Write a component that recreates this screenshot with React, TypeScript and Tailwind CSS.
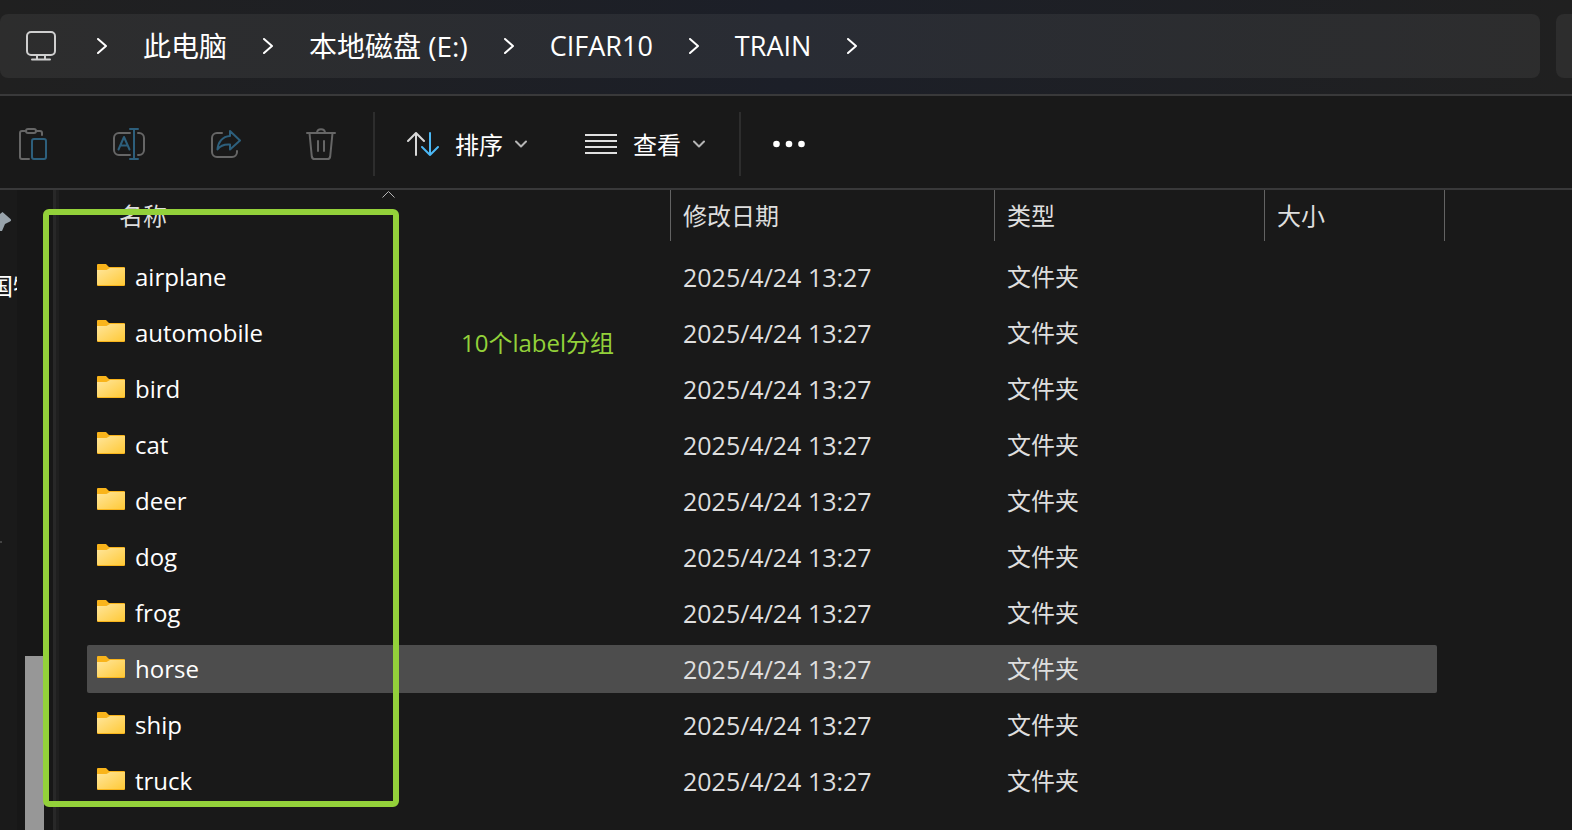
import React from "react";

interface IconProps {
  className?: string;
}

const crumbs = [
  { name: "此电脑", size: "text-[28px]" },
  { name: "本地磁盘 (E:)", size: "text-[28px]" },
  { name: "CIFAR10", size: "text-[27px]" },
  { name: "TRAIN", size: "text-[27px]" },
];

const folders = [
  "airplane",
  "automobile",
  "bird",
  "cat",
  "deer",
  "dog",
  "frog",
  "horse",
  "ship",
  "truck",
];

const selected = "horse";

function MonitorIcon() {
  return (
    <svg width="32" height="32" viewBox="0 0 32 32" fill="none" stroke="#cfcfcf" strokeWidth="2" strokeLinecap="round">
      <rect x="2" y="2" width="28" height="23" rx="4" />
      <path d="M12 25v4M20 25v4M7 29.5h18" />
    </svg>
  );
}

function CrumbArrow() {
  return (
    <svg className="shrink-0" width="10" height="16" viewBox="0 0 10 16" fill="none" stroke="#fff" strokeWidth="2" strokeLinecap="round" strokeLinejoin="round">
      <path d="M1 1l8 7-8 7" />
    </svg>
  );
}

function DownArrow({ className }: IconProps) {
  return (
    <svg className={className} width="12" height="8" viewBox="0 0 12 8" fill="none" stroke="#b5b5b5" strokeWidth="2" strokeLinecap="round" strokeLinejoin="round">
      <path d="M1 1.5l5 5 5-5" />
    </svg>
  );
}

function PasteIcon() {
  return (
    <svg width="32" height="32" viewBox="0 0 32 32" fill="none" stroke="#666" strokeWidth="2" strokeLinecap="round" strokeLinejoin="round">
      <path d="M9 3H5a2 2 0 0 0-2 2v24a2 2 0 0 0 2 2h7M19 3h4a2 2 0 0 1 2 2v2" />
      <rect x="9" y="1" width="10" height="4" rx="2" />
      <rect x="15" y="11" width="14" height="20" rx="2" stroke="#2d5f7c" />
    </svg>
  );
}

function RenameIcon() {
  return (
    <svg width="32" height="32" viewBox="0 0 32 32" fill="none" stroke="#666" strokeWidth="2" strokeLinecap="round" strokeLinejoin="round">
      <path d="M17 5H6a5 5 0 0 0-5 5v12a5 5 0 0 0 5 5h11M25 5h1a5 5 0 0 1 5 5v12a5 5 0 0 1-5 5h-1" />
      <path d="M5.5 21.500l5.500-12.500 5.500 12.500M7.500 17.500h7M21 1v30M17 1h8M17 31h8" stroke="#2d5f7c" />
    </svg>
  );
}

function ShareIcon() {
  return (
    <svg width="32" height="32" viewBox="0 0 32 32" fill="none" stroke="#666" strokeWidth="2" strokeLinecap="round" strokeLinejoin="round">
      <path d="M13 5H8a5 5 0 0 0-5 5v14a5 5 0 0 0 5 5h15a5 5 0 0 0 5-5v-1" />
      <path d="M21 3l10 9.500-10 9v-5c-6-.5-10 1.500-12.500 5C9 14 13.500 8.500 21 8z" stroke="#2d5f7c" />
    </svg>
  );
}

function DeleteIcon() {
  return (
    <svg width="32" height="32" viewBox="0 0 32 32" fill="none" stroke="#666" strokeWidth="2" strokeLinecap="round" strokeLinejoin="round">
      <path d="M2 5h28M12 5c0-5 8-5 8 0M4.500 5l2.300 23.500c.2 1.500 1 2.500 2.700 2.500h13c1.700 0 2.500-1 2.700-2.500L27.500 5M13 13v10M19 13v10" />
    </svg>
  );
}

function SortIcon() {
  return (
    <svg width="32" height="24" viewBox="0 0 32 24" fill="none" stroke="#d8d8d8" strokeWidth="2" strokeLinecap="round" strokeLinejoin="round">
      <path d="M9 23V1M1 9l8-8 8 8" />
      <path d="M23 1v22M15 15l8 8 8-8" stroke="#4cb8f5" />
    </svg>
  );
}

function ViewIcon() {
  return (
    <svg width="32" height="20" viewBox="0 0 32 20" fill="none" stroke="#e0e0e0" strokeWidth="2">
      <path d="M0 1h32M0 7h32M0 13h32M0 19h32" />
    </svg>
  );
}

function FolderIcon() {
  return (
    <svg className="shrink-0" width="28" height="26" viewBox="0 0 28 26">
      <path d="M0 1a1 1 0 0 1 1-1h8l3 3h15a1 1 0 0 1 1 1v17a1 1 0 0 1-1 1H1a1 1 0 0 1-1-1z" fill="#f9b41b" />
      <path d="M0 6h9.500L13 4h15v16a1 1 0 0 1-1 1H1a1 1 0 0 1-1-1z" fill="url(#folder)" />
    </svg>
  );
}

function AddressBar() {
  return (
    <header className="flex gap-4 border-b-2 border-[#39393a] bg-linear-to-r from-[#202020] via-[#1c1f28] to-[#202020] py-[14px] pb-4">
      <nav className="flex h-16 flex-1 items-center gap-9 rounded-lg bg-white/6 pl-[25px]">
        <button aria-label="位置" className="mr-1">
          <MonitorIcon />
        </button>
        <CrumbArrow />
        {crumbs.map((crumb) => (
          <React.Fragment key={crumb.name}>
            <a href="#" className={`whitespace-nowrap leading-8 ${crumb.size}`}>
              {crumb.name}
            </a>
            <CrumbArrow />
          </React.Fragment>
        ))}
      </nav>
      <div className="h-16 w-4 rounded-l-lg bg-white/6" />
    </header>
  );
}

function Toolbar() {
  return (
    <div className="flex h-[94px] items-center border-b-2 border-[#39393a] pt-1">
      <div className="flex gap-16 pl-[17px]">
        <button aria-label="粘贴">
          <PasteIcon />
        </button>
        <button aria-label="重命名">
          <RenameIcon />
        </button>
        <button aria-label="共享">
          <ShareIcon />
        </button>
        <button aria-label="删除">
          <DeleteIcon />
        </button>
      </div>
      <div className="ml-9 h-16 w-[2px] bg-[#2d2d2d]" />
      <button className="ml-8 flex items-center">
        <SortIcon />
        <span className="ml-4 pt-[2px]">排序</span>
        <DownArrow className="ml-3" />
      </button>
      <button className="ml-[58px] flex items-center">
        <ViewIcon />
        <span className="ml-4 pt-[2px]">查看</span>
        <DownArrow className="ml-3" />
      </button>
      <div className="ml-[34px] h-16 w-[2px] bg-[#2d2d2d]" />
      <button aria-label="更多" className="ml-8">
        <svg width="32" height="8" viewBox="0 0 32 8" fill="#fff">
          <circle cx="3.500" cy="4" r="3.300" />
          <circle cx="16" cy="4" r="3.300" />
          <circle cx="28.500" cy="4" r="3.300" />
        </svg>
      </button>
    </div>
  );
}

function Sidebar() {
  return (
    <aside className="flex w-[59px] shrink-0 bg-[#171717]">
      <div className="w-[17px] overflow-hidden bg-[#1a1a1a] pt-[22px]">
        <svg width="12" height="20" viewBox="0 0 12 20" fill="#98a3ab">
          <path d="M0 2l2.500-2 8 7c1 1 .7 2-.5 2.500L5 12l-3 7H0z" />
        </svg>
        <p className="-ml-[11px] mt-[38px] whitespace-nowrap leading-8">国特</p>
        <div className="mt-[239px] h-[2px] w-[2px] bg-[#444]" />
      </div>
      <div className="ml-2 flex w-[19px] flex-col pt-[466px]">
        <div className="flex-1 bg-[#979797]" />
      </div>
      <div className="ml-[9px] w-[3px] bg-[#282828]" />
      <div className="w-[3px] bg-[#1f1f1f]" />
    </aside>
  );
}

function HeaderCell({ title, sorted }: { title: string; sorted?: boolean }) {
  return (
    <th className="relative h-[55px] p-0 text-left align-top font-normal">
      {sorted && (
        <svg className="absolute left-[295px] top-px" width="13" height="7" viewBox="0 0 13 7" fill="none" stroke="#b5b5b5">
          <path d="M.5 6.500l6-6 6 6" />
        </svg>
      )}
      <button
        className={`flex h-[51px] w-full items-center border-r border-[#636363] ${sorted ? "pl-8" : "pl-3"}`}
      >
        {title}
      </button>
    </th>
  );
}

function FileTable() {
  return (
    <table className="-mt-2 ml-7 w-[1358px] table-fixed border-separate self-start border-spacing-x-0 border-spacing-y-2 text-[#dedede]">
      <colgroup>
        <col className="w-[584px]" />
        <col className="w-[324px]" />
        <col className="w-[270px]" />
        <col className="w-[180px]" />
      </colgroup>
      <thead>
        <tr>
          <HeaderCell title="名称" sorted />
          <HeaderCell title="修改日期" />
          <HeaderCell title="类型" />
          <HeaderCell title="大小" />
        </tr>
      </thead>
      <tbody>
        {folders.map((name) => {
          const bg = name === selected ? "bg-[#4d4d4d]" : "";
          return (
            <tr key={name}>
              <td className={`h-12 rounded-l-xs p-0 pl-[10px] ${bg}`}>
                <div className="flex items-center gap-[10px] text-white">
                  <FolderIcon />
                  <span className="leading-8">{name}</span>
                </div>
              </td>
              <td className={`p-0 pl-3 text-[25px] ${bg}`}>2025/4/24 13:27</td>
              <td className={`p-0 pl-3 ${bg}`}>文件夹</td>
              <td className="p-0 pr-2">
                <div className={`h-12 rounded-r-xs ${bg}`} />
              </td>
            </tr>
          );
        })}
      </tbody>
    </table>
  );
}

export default function App() {
  return (
    <div className="flex min-h-screen flex-col overflow-hidden bg-[#191919] font-['Open_Sans','Noto_Sans_CJK_SC',sans-serif] text-2xl leading-8 text-white">
      <svg className="absolute" width="0" height="0">
        <linearGradient id="folder" x1="0" y1="0" x2="1" y2="1">
          <stop offset="0" stopColor="#ffe69c" />
          <stop offset="1" stopColor="#ffc937" />
        </linearGradient>
      </svg>
      <AddressBar />
      <Toolbar />
      <main className="relative flex flex-1">
        <Sidebar />
        <FileTable />
        {/* markup drawn over the file list */}
        <div className="pointer-events-none absolute left-[43px] top-[19px] h-[598px] w-[356px] rounded-md border-6 border-[#93d13a]" />
        <p className="absolute left-[461px] top-[137px] text-[#93d13a]">10个label分组</p>
      </main>
    </div>
  );
}
